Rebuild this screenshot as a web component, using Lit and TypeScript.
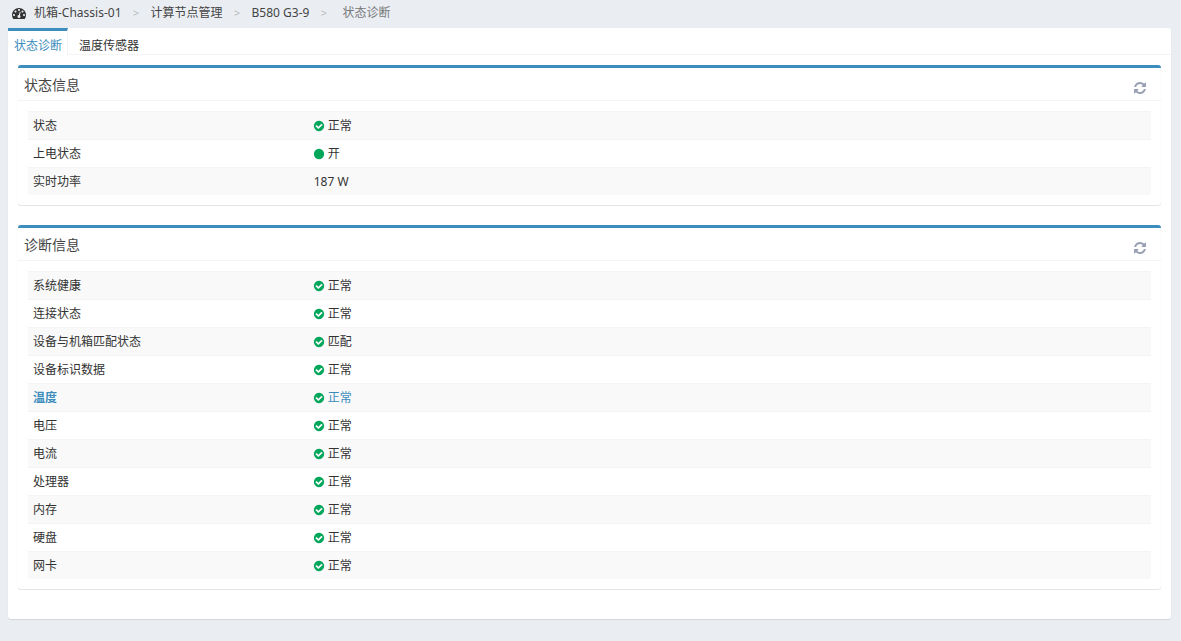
import { LitElement, html, css, svg, nothing } from "lit";
import { customElement, property } from "lit/decorators.js";
import { classMap } from "lit/directives/class-map.js";

type Kind = "ok" | "on" | "plain";

interface Row {
  label: string;
  value: string;
  kind: Kind;
  href?: string;
}

const ICONS = {
  dashboard: svg`<path d="M384 1152q0-53-37.5-90.5t-90.5-37.5-90.5 37.5-37.5 90.5 37.5 90.5 90.5 37.5 90.5-37.5 37.5-90.5zm192-448q0-53-37.5-90.5t-90.5-37.5-90.5 37.5-37.5 90.5 37.5 90.5 90.5 37.5 90.5-37.5 37.5-90.5zm428 481l101-382q6-26-7.5-48.5t-38.5-29.5-48 6.5-30 39.5l-101 382q-60 5-107 43.5t-63 98.5q-20 77 20 146t117 89 146-20 89-117q16-60-6-117t-72-91zm660-33q0-53-37.5-90.5t-90.5-37.5-90.5 37.5-37.5 90.5 37.5 90.5 90.5 37.5 90.5-37.5 37.5-90.5zm-640-640q0-53-37.5-90.5t-90.5-37.5-90.5 37.5-37.5 90.5 37.5 90.5 90.5 37.5 90.5-37.5 37.5-90.5zm448 192q0-53-37.5-90.5t-90.5-37.5-90.5 37.5-37.5 90.5 37.5 90.5 90.5 37.5 90.5-37.5 37.5-90.5zm320 448q0 261-141 483-19 29-54 29h-1402q-35 0-54-29-141-221-141-483 0-182 71-348t191-286 286-191 348-71 348 71 286 191 191 286 71 348z"/>`,
  refresh: svg`<path d="M1639 1056q0 5-1 7-64 268-268 434.5t-478 166.5q-146 0-282.5-55t-243.5-157l-129 129q-19 19-45 19t-45-19-19-45v-448q0-26 19-45t45-19h448q26 0 45 19t19 45-19 45l-137 137q71 66 161 102t187 36q134 0 250-65t186-179q11-17 53-117 8-23 30-23h192q13 0 22.5 9.5t9.5 22.5zm25-800v448q0 26-19 45t-45 19h-448q-26 0-45-19t-19-45 19-45l138-138q-148-137-349-137-134 0-250 65t-186 179q-11 17-53 117-8 23-30 23h-199q-13 0-22.5-9.5t-9.5-22.5v-7q65-268 270-434.5t480-166.5q146 0 284 55.5t245 156.5l130-129q19-19 45-19t45 19 19 45z"/>`,
  ok: svg`<path d="M1412 734q0-28-18-46l-91-90q-19-19-45-19t-45 19l-408 407-226-226q-19-19-45-19t-45 19l-91 90q-18 18-18 46 0 27 18 45l362 362q19 19 45 19 27 0 46-19l543-543q18-18 18-45zm252 162q0 209-103 385.5t-279.5 279.5-385.5 103-385.5-103-279.5-279.5-103-385.5 103-385.5 279.5-279.5 385.5-103 385.5 103 279.5 279.5 103 385.5z"/>`,
  on: svg`<circle cx="896" cy="896" r="768"/>`,
};

const STATUS: Row[] = [
  { label: "状态", value: "正常", kind: "ok" },
  { label: "上电状态", value: "开", kind: "on" },
  { label: "实时功率", value: "187 W", kind: "plain" },
];

const DIAGNOSIS: Row[] = [
  { label: "系统健康", value: "正常", kind: "ok" },
  { label: "连接状态", value: "正常", kind: "ok" },
  { label: "设备与机箱匹配状态", value: "匹配", kind: "ok" },
  { label: "设备标识数据", value: "正常", kind: "ok" },
  { label: "温度", value: "正常", kind: "ok", href: "#temperature" },
  { label: "电压", value: "正常", kind: "ok" },
  { label: "电流", value: "正常", kind: "ok" },
  { label: "处理器", value: "正常", kind: "ok" },
  { label: "内存", value: "正常", kind: "ok" },
  { label: "硬盘", value: "正常", kind: "ok" },
  { label: "网卡", value: "正常", kind: "ok" },
];

@customElement("info-box")
export class InfoBox extends LitElement {
  @property() heading = "";
  @property({ attribute: false }) rows: Row[] = [];

  static styles = css`
    :host {
      display: block;
    }
    .box {
      background: #fff;
      border-top: 3px solid #3c8dbc;
      border-radius: 3px;
      box-shadow: 0 1px 1px rgba(0, 0, 0, 0.1), 0 0 1px rgba(0, 0, 0, 0.08);
    }
    .head {
      display: flex;
      align-items: center;
      justify-content: space-between;
      box-sizing: border-box;
      height: 33px;
      padding: 2px 14px 0 6px;
      border-bottom: 1px solid #f4f4f4;
    }
    .title {
      margin: 0;
      font-size: 14px;
      line-height: 20px;
      font-weight: 400;
      color: #444;
    }
    .refresh {
      display: flex;
      margin: 0;
      padding: 6px 0 0;
      border: 0;
      background: none;
      color: #97a0b3;
      cursor: pointer;
    }
    .icon {
      display: block;
      width: 14px;
      height: 14px;
      fill: currentColor;
    }
    .body {
      padding: 10px;
    }
    .table {
      width: 100%;
      table-layout: fixed;
      border-collapse: separate;
      border-spacing: 0;
    }
    .label,
    .value {
      box-sizing: border-box;
      height: 28px;
      padding: 0 5px;
      border-top: 1px solid #f4f4f4;
      font-weight: 400;
      text-align: left;
      line-height: 20px;
      color: #333;
    }
    .label {
      width: 25%;
    }
    .row:nth-child(odd) {
      background: #f9f9f9;
    }
    .state {
      display: flex;
      align-items: center;
      gap: 3px;
    }
    .mark {
      width: 12px;
      height: 12px;
      margin-left: -1px;
      fill: #00a65a;
    }
    .link {
      color: #3c8dbc;
      text-decoration: none;
    }
    .strong {
      font-weight: 700;
    }
  `;

  private text(row: Row, value: string, strong = false) {
    return row.href
      ? html`<a class=${classMap({ link: true, strong })} href=${row.href}>${value}</a>`
      : html`<span>${value}</span>`;
  }

  render() {
    return html`
      <section class="box">
        <header class="head">
          <h2 class="title">${this.heading}</h2>
          <button class="refresh" type="button" aria-label="刷新">
            <svg class="icon" viewBox="0 0 1792 1792" aria-hidden="true">${ICONS.refresh}</svg>
          </button>
        </header>
        <div class="body">
          <table class="table">
            <tbody>
              ${this.rows.map(
                (row) => html`
                  <tr class="row">
                    <th class="label" scope="row">${this.text(row, row.label, true)}</th>
                    <td class="value">
                      <div class="state">
                        ${row.kind === "plain"
                          ? nothing
                          : html`<svg class="mark" viewBox="0 0 1792 1792" aria-hidden="true">
                              ${ICONS[row.kind]}
                            </svg>`}
                        ${this.text(row, row.value)}
                      </div>
                    </td>
                  </tr>
                `
              )}
            </tbody>
          </table>
        </div>
      </section>
    `;
  }
}

@customElement("app-root")
export class AppRoot extends LitElement {
  static styles = css`
    :host {
      display: block;
      box-sizing: border-box;
      min-height: 100vh;
      padding: 0 10px 20px 8px;
      background: #eaeef3;
      color: #333;
      font-family: "Noto Sans", "Noto Sans CJK SC", sans-serif;
      font-size: 12px;
      line-height: 20px;
    }
    .crumbs {
      display: flex;
      align-items: center;
      height: 28px;
      margin: 0;
      padding: 0 4px 2px;
      box-sizing: border-box;
      list-style: none;
    }
    .crumb {
      display: flex;
      align-items: center;
    }
    .crumb + .crumb::before {
      content: ">";
      width: 29px;
      text-align: center;
      font-size: 11px;
      color: #bbb;
    }
    .crumb-link {
      display: flex;
      align-items: center;
      gap: 8px;
      color: #444;
      text-decoration: none;
    }
    .current {
      gap: 4px;
      color: #777;
    }
    .gauge {
      width: 14px;
      height: 14px;
      fill: #333;
    }
    .panel {
      background: #fff;
      border-radius: 3px;
      box-shadow: 0 1px 1px rgba(0, 0, 0, 0.1);
    }
    .tabs {
      display: flex;
      height: 27px;
      box-sizing: border-box;
      box-shadow: inset 0 -1px #f4f4f4;
    }
    .tab {
      padding: 5px 5px 0 6px;
      border-top: 3px solid transparent;
      border-right: 1px solid transparent;
      line-height: 19px;
      color: #333;
      text-decoration: none;
    }
    .tab + .tab {
      padding-left: 11px;
    }
    .active {
      border-top-color: #3c8dbc;
      border-right-color: #f4f4f4;
      background: #fff;
      color: #3c8dbc;
    }
    .content {
      display: flex;
      flex-direction: column;
      gap: 20px;
      padding: 10px 10px 30px;
    }
  `;

  render() {
    return html`
      <nav aria-label="路径">
        <ol class="crumbs">
          <li class="crumb">
            <a class="crumb-link" href="#chassis">
              <svg class="gauge" viewBox="0 0 1792 1792" aria-hidden="true">${ICONS.dashboard}</svg>
              <span>机箱-Chassis-01</span>
            </a>
          </li>
          <li class="crumb"><a class="crumb-link" href="#nodes">计算节点管理</a></li>
          <li class="crumb"><a class="crumb-link" href="#node">B580 G3-9</a></li>
          <li class="crumb current" aria-current="page">状态诊断</li>
        </ol>
      </nav>
      <main class="panel">
        <nav class="tabs" aria-label="视图">
          <a class="tab active" href="#status" aria-current="page">状态诊断</a>
          <a class="tab" href="#temperature">温度传感器</a>
        </nav>
        <div class="content">
          <info-box heading="状态信息" .rows=${STATUS}></info-box>
          <info-box heading="诊断信息" .rows=${DIAGNOSIS}></info-box>
        </div>
      </main>
    `;
  }
}
